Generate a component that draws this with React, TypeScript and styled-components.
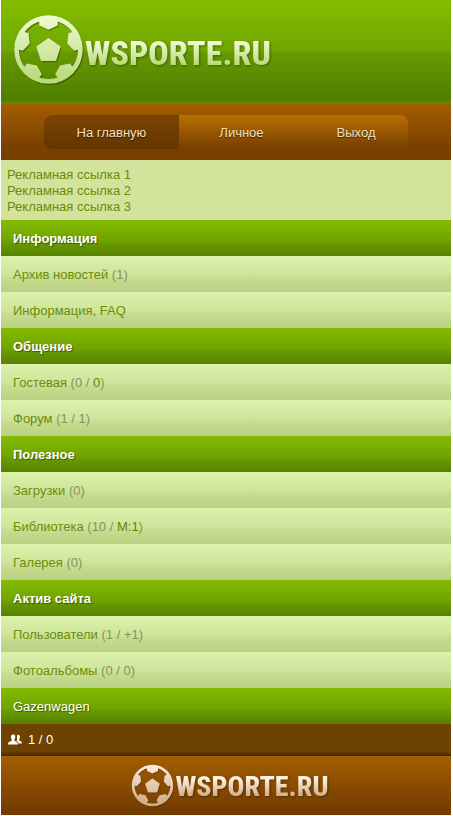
import React, { useId } from "react";
import styled, { createGlobalStyle } from "styled-components";

const GlobalStyle = createGlobalStyle`
  body {
    margin: 0;
    background: #fff;
    font-family: "Liberation Sans", Arial, sans-serif;
    font-size: 13px;
    line-height: 16px;
  }
`;

const Page = styled.div`
  margin: 0 2px 0 1px;
  background: #d3e39b;
`;

const Header = styled.header`
  display: flex;
  padding: 14px 12px 16px;
  background: linear-gradient(#84bd00, #6fa600 50%, #669a00 52%, #4f7d00);
  border-bottom: 3px solid #658400;
`;

const LogoLink = styled.a`
  display: flex;
  align-items: center;
  gap: 1px;
  text-decoration: none;
`;

const BallSvg = styled.svg<{ $size: number }>`
  flex: none;
  width: ${(p) => p.$size}px;
  height: ${(p) => p.$size}px;
`;

const LogoText = styled.span<{ $size: number; $drop: number; $from: string; $to: string }>`
  padding-top: ${(p) => p.$drop}px;
  font-family: "Roboto Condensed", Roboto, sans-serif;
  font-size: ${(p) => p.$size}px;
  line-height: 1;
  font-weight: 800;
  color: transparent;
  background: linear-gradient(${(p) => p.$from} 30%, ${(p) => p.$to} 90%);
  background-clip: text;
  filter: drop-shadow(1px 1px 1px rgba(0, 0, 0, 0.35));
`;

const NavBar = styled.nav`
  display: flex;
  justify-content: center;
  padding: 11px 0;
  background: linear-gradient(#a35e00, #7a4100 75%, #763f00);
`;

const NavList = styled.div`
  display: flex;
  overflow: hidden;
  border-radius: 8px;
  background: linear-gradient(#ba6f00, #7c4300 90%);
`;

const NavLink = styled.a<{ $active?: boolean; $wide?: boolean }>`
  padding: 10px ${(p) => (p.$wide ? 40 : 33)}px 8px;
  color: #f3e3c4;
  text-decoration: none;
  text-shadow: 0 1px 1px rgba(0, 0, 0, 0.6);
  background: ${(p) => (p.$active ? "linear-gradient(#7b4500, #633500)" : "none")};
`;

const Ads = styled.section`
  display: flex;
  flex-direction: column;
  align-items: flex-start;
  padding: 7px 6px 5px;
`;

const AdLink = styled.a`
  color: #6b8d08;
  text-decoration: none;
`;

const SectionTitle = styled.h2`
  margin: 0;
  padding: 11px 12px 9px;
  font-size: 13px;
  line-height: 16px;
  color: #fff;
  text-shadow: 1px 1px 1px rgba(0, 0, 0, 0.45);
  background: linear-gradient(#84bb00, #6fa200 60%, #699a00 64%, #568200);
`;

const Row = styled.div`
  padding: 11px 12px 9px;
  color: #84945c;
  background: linear-gradient(#dcf3ad, #cde398 55%, #c8de92 58%, #b9d182);
`;

const RowLink = styled.a`
  color: #6b8d08;
  text-decoration: none;
`;

const Accent = styled.span`
  color: #5d8700;
`;

const UserLink = styled.a`
  display: block;
  padding: 11px 12px 9px;
  color: #fff;
  text-decoration: none;
  text-shadow: 1px 1px 1px rgba(0, 0, 0, 0.45);
  background: linear-gradient(#84bb00, #6fa200 60%, #699a00 64%, #568200);
`;

const Online = styled.div`
  display: flex;
  align-items: center;
  gap: 6px;
  padding: 8px 7px;
  color: #fff;
  background: linear-gradient(#6e4203 85%, #422702);
`;

const Footer = styled.footer`
  display: flex;
  justify-content: center;
  padding: 8px 0 8px 8px;
  background: linear-gradient(#a35e00, #6f3900);
`;

const patch = "M-31 -96 L-31 -88 L-28 -84 L-28 -73 L0 -60 L28 -73 L28 -84 L31 -88 L31 -96 Z";

function Ball({ size, from, to }: { size: number; from: string; to: string }) {
  const id = useId();
  return (
    <BallSvg $size={size} viewBox="-108 -108 216 216" aria-hidden="true">
      <defs>
        <linearGradient id={`${id}g`} x1="0" y1="0" x2="0" y2="1">
          <stop offset="0" stopColor={from} />
          <stop offset="1" stopColor={to} />
        </linearGradient>
        <mask id={`${id}m`} maskUnits="userSpaceOnUse" x="-108" y="-108" width="216" height="216">
          <circle r="97" fill="none" stroke="#fff" strokeWidth="14" />
          <path d="M0 -35 L37 -9 L23 35 L-23 35 L-37 -9 Z" fill="#fff" />
          {[0, 72, 144, 216, 288].map((angle) => (
            <path key={angle} d={patch} fill="#fff" transform={`rotate(${angle})`} />
          ))}
        </mask>
      </defs>
      <g transform="translate(3 4)" opacity="0.3">
        <rect x="-108" y="-108" width="216" height="216" mask={`url(#${id}m)`} />
      </g>
      <rect x="-108" y="-108" width="216" height="216" fill={`url(#${id}g)`} mask={`url(#${id}m)`} />
    </BallSvg>
  );
}

type LogoProps = { ball: number; text: number; drop: number; from: string; to: string };

function Logo({ ball, text, drop, from, to }: LogoProps) {
  return (
    <LogoLink href="#">
      <Ball size={ball} from={from} to={to} />
      <LogoText $size={text} $drop={drop} $from={from} $to={to}>
        WSPORTE.RU
      </LogoText>
    </LogoLink>
  );
}

type Item = { label: string; before?: string; accent?: string; after?: string };

const sections: { title: string; items: Item[] }[] = [
  { title: "Информация", items: [{ label: "Архив новостей", before: "(1)" }, { label: "Информация, FAQ" }] },
  {
    title: "Общение",
    items: [
      { label: "Гостевая", before: "(0 / ", accent: "0", after: ")" },
      { label: "Форум", before: "(1 / 1)" },
    ],
  },
  {
    title: "Полезное",
    items: [
      { label: "Загрузки", before: "(0)" },
      { label: "Библиотека", before: "(10 / ", accent: "M:1", after: ")" },
      { label: "Галерея", before: "(0)" },
    ],
  },
  {
    title: "Актив сайта",
    items: [
      { label: "Пользователи", before: "(1 / +1)" },
      { label: "Фотоальбомы", before: "(0 / 0)" },
    ],
  },
];

export default function App() {
  return (
    <>
      <GlobalStyle />
      <Page>
        <Header>
          <Logo ball={71} text={34} drop={6} from="#f0fbd4" to="#b5d873" />
        </Header>
        <NavBar>
          <NavList>
            <NavLink href="#" $active>
              На главную
            </NavLink>
            <NavLink href="#" $wide>
              Личное
            </NavLink>
            <NavLink href="#">Выход</NavLink>
          </NavList>
        </NavBar>
        <Ads>
          <AdLink href="#">Рекламная ссылка 1</AdLink>
          <AdLink href="#">Рекламная ссылка 2</AdLink>
          <AdLink href="#">Рекламная ссылка 3</AdLink>
        </Ads>
        <main>
          {sections.map((section) => (
            <section key={section.title}>
              <SectionTitle>{section.title}</SectionTitle>
              {section.items.map((item) => (
                <Row key={item.label}>
                  <RowLink href="#">{item.label}</RowLink> {item.before}
                  {item.accent && <Accent>{item.accent}</Accent>}
                  {item.after}
                </Row>
              ))}
            </section>
          ))}
        </main>
        <UserLink href="#">Gazenwagen</UserLink>
        <Online>
          <svg width="14" height="12" viewBox="0 0 14 12" fill="#fff" aria-hidden="true">
            <path d="M9 2.2C9 1 10 .6 10.7 .9C12 1 12.2 2.5 11.7 4C11.4 5 11 5.500 11.300 6.500C12.500 7.300 14 7.400 14 9.500H10.500C10.300 8 9.500 7.500 8.500 7.100C8.600 6.200 9.400 5.600 9 4.500Z" />
            <path d="M3 3C3 1 4 .3 5.200 .5C7 .3 7.600 1.800 7.200 3.500C7 5 6.200 5.500 6.400 6.800C8 7.600 9.800 7.800 9.900 10.500H0C.1 7.800 2 7.600 3.800 6.800C4 5.500 3.100 5 3 3Z" />
          </svg>
          <span>1 / 0</span>
        </Online>
        <Footer>
          <Logo ball={43} text={28} drop={3} from="#fdeedd" to="#cba67c" />
        </Footer>
      </Page>
    </>
  );
}
